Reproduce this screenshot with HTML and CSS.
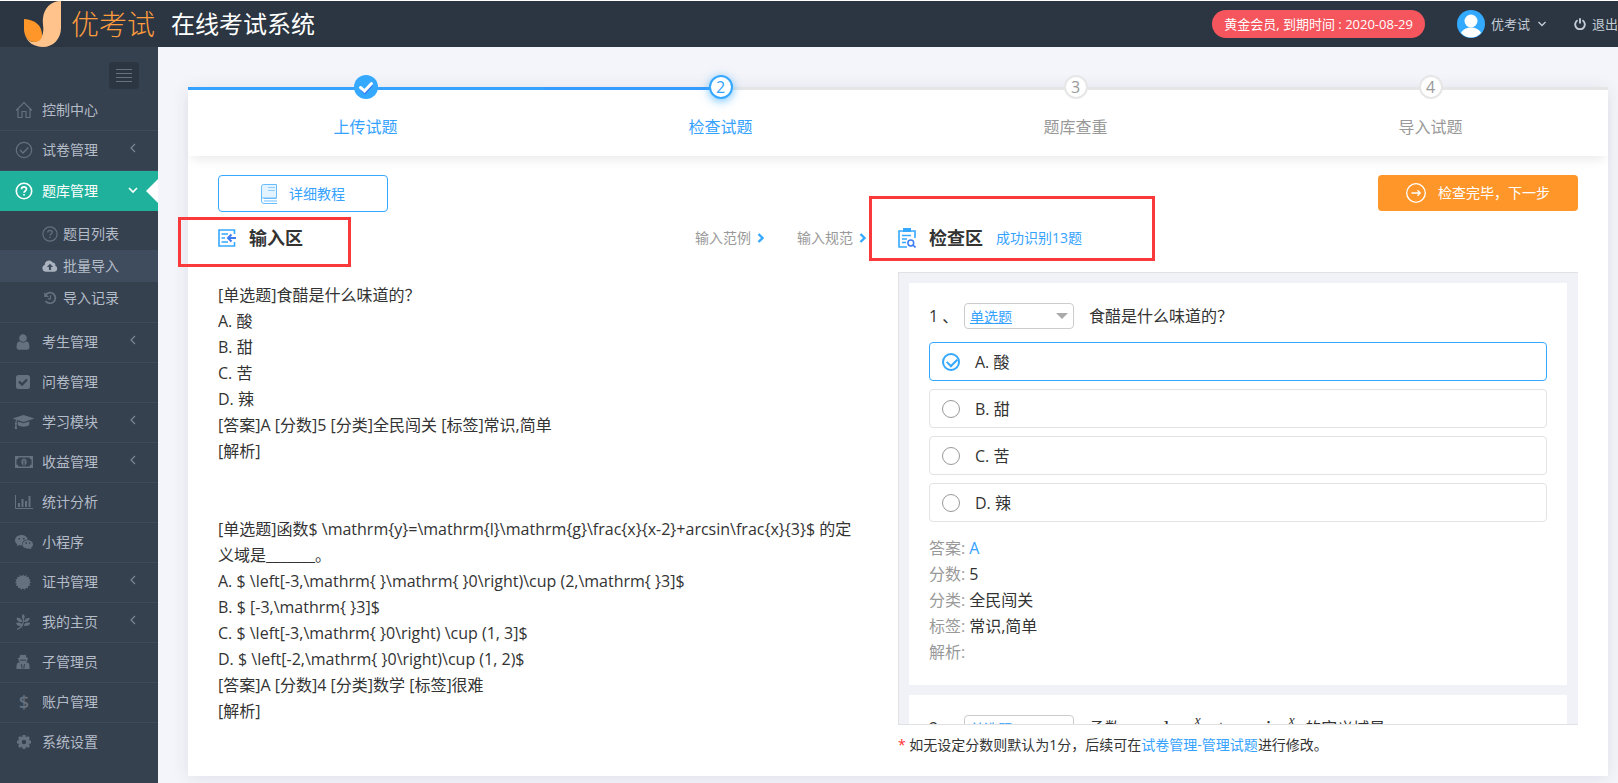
FILE: index.html
```html
<!DOCTYPE html>
<html lang="zh-CN">
<head>
<meta charset="utf-8">
<title>优考试 在线考试系统</title>
<link rel="stylesheet" href="styles.css">
</head>
<body>
<header class="topbar">
  <a class="brand" href="#">
    <svg class="brand-logo" viewBox="0 0 38 46" aria-hidden="true">
      <path d="M18 35C21 28 18 23 19 17C20 7 27 0 37 0V27C37 38 29 46 19 46C10 46 3 41 1 34C4 42 14 44 18 35Z" fill="#ffc38b"/>
      <path d="M0 18C11 19 18 24 18 34C18 38 15 41 11 41C4 41 0 35 0 28Z" fill="#ff962a"/>
    </svg>
    <span class="brand-name">优考试</span>
  </a>
  <h1 class="system-name">在线考试系统</h1>
  <span class="member-badge">黄金会员, 到期时间 : 2020-08-29</span>
  <button class="account" type="button">
    <svg class="avatar" viewBox="0 0 28 28" aria-hidden="true">
      <circle cx="14" cy="14" r="14" fill="#33a9ff"/>
      <circle cx="14" cy="11" r="6.5" fill="#fff"/>
      <path d="M4 23C6 19 10 17.500 14 17.500S22 19 24 23C21 26 18 27.500 14 27.500S7 26 4 23Z" fill="#fff"/>
    </svg>
    <span>优考试</span>
    <svg class="caret" viewBox="0 0 8 8" aria-hidden="true"><path d="M.5 2L4 5.500L7.500 2" fill="none" stroke="currentColor" stroke-width="1.300"/></svg>
  </button>
  <a class="logout" href="#">
    <svg viewBox="0 0 12 12" aria-hidden="true"><path d="M3.600 2.300A4.800 4.800 0 1 0 8.400 2.300M6 .3V5.600" fill="none" stroke="currentColor" stroke-width="1.900"/></svg>
    <span>退出</span>
  </a>
</header>

<div class="layout">
  <aside class="sidebar">
    <button class="menu-toggle" type="button" aria-label="菜单">
      <svg viewBox="0 0 16 14" aria-hidden="true"><path d="M0 .5H16M0 4.500H16M0 8.500H16M0 12.500H16" stroke="#66717f"/></svg>
    </button>
    <nav>
      <ul class="menu">
        <li><a class="menu-item" href="#"><svg class="ico" viewBox="0 0 18 18"><path d="M1 9.500L9 1.500L17 9.500M3 8V16.500H7V10.500H11V16.500H15V8" fill="none" stroke="currentColor" stroke-width="1.200"/></svg><span>控制中心</span></a></li>
        <li><a class="menu-item" href="#"><svg class="ico" viewBox="0 0 18 18"><circle cx="9" cy="9" r="7.700" fill="none" stroke="currentColor" stroke-width="1.200"/><path d="M5 9L8 12L13.300 6.500" fill="none" stroke="currentColor" stroke-width="1.300"/></svg><span>试卷管理</span><svg class="arrow" viewBox="0 0 10 10"><path d="M7 1L3 5L7 9" /></svg></a></li>
        <li><a class="menu-item active" href="#"><svg class="ico" viewBox="0 0 18 18"><circle cx="9" cy="9" r="7.700" fill="none" stroke="currentColor" stroke-width="1.600"/><path d="M6.500 7.300C6.500 4.200 11.500 4.200 11.500 7.100C11.500 8.900 9 9 9 10.800M9 12V13.600" fill="none" stroke="currentColor" stroke-width="1.700"/></svg><span>题库管理</span><svg class="arrow" viewBox="0 0 10 10"><path d="M1 3L5 7L9 3"/></svg></a>
          <ul class="submenu">
            <li><a href="#"><svg class="ico" viewBox="0 0 18 18"><circle cx="9" cy="9" r="8" fill="none" stroke="currentColor" stroke-width="1.300"/><path d="M6.500 7.300C6.500 4.200 11.500 4.200 11.500 7.100C11.500 8.900 9 9 9 10.800M9 12V13.600" fill="none" stroke="currentColor" stroke-width="1.500"/></svg><span>题目列表</span></a></li>
            <li><a class="current" href="#"><svg class="ico" viewBox="0 0 18 18"><path d="M4 15.500A4 4 0 0 1 3 7.800A5 5 0 0 1 12 5A3 3 0 0 1 15 8.800A3.500 3.500 0 0 1 14 15.500ZM9 6.500L5.500 10H7.800V13.500H10.200V10H12.500Z" fill="currentColor" fill-rule="evenodd"/></svg><span>批量导入</span></a></li>
            <li><a href="#"><svg class="ico" viewBox="0 0 18 18"><path d="M4.300 5.200A6 6 0 1 1 4 12.300" fill="none" stroke="currentColor" stroke-width="2"/><path d="M2.500 2.500V8H8Z" fill="currentColor"/><path d="M9.500 6V10H6.500" fill="none" stroke="currentColor" stroke-width="1.400"/></svg><span>导入记录</span></a></li>
          </ul>
        </li>
        <li><a class="menu-item" href="#"><svg class="ico solid" viewBox="0 0 1792 1792"><path d="M1536 1399q0 109-62.500 187t-150.500 78H469q-88 0-150.500-78T256 1399q0-85 8.500-160.500t31.500-152 58.500-131 94-89T583 832q131 128 313 128t313-128q76 0 134.500 34.500t94 89 58.500 131 31.500 152 8.500 160.500zM1280 512q0 159-112.500 271.500T896 896 624.500 783.500 512 512t112.500-271.500T896 128t271.500 112.500T1280 512z"/></svg><span>考生管理</span><svg class="arrow" viewBox="0 0 10 10"><path d="M7 1L3 5L7 9"/></svg></a></li>
        <li><a class="menu-item" href="#"><svg class="ico solid" viewBox="0 0 18 18"><rect x="2" y="2" width="14" height="14" rx="2.500"/><path d="M5 8.500L8 11.500L13 6.500" fill="none" stroke="#36414f" stroke-width="2.300"/></svg><span>问卷管理</span></a></li>
        <li><a class="menu-item" href="#"><svg class="ico wide solid" viewBox="0 0 2304 1792"><path d="M1774 836l18 316q4 69-82 128t-235 93.500-323 34.500-323-34.500T594 1280t-82-128l18-316 574 181q22 7 48 7t48-7zM2304 512q0 23-22 31l-1120 352q-4 1-10 1t-10-1L490 689q-43 34-71 111.500T385 978q63 36 63 109 0 69-58 107l58 433q2 14-8 25-9 11-24 11H224q-15 0-24-11-10-11-8-25l58-433q-58-38-58-107 0-73 65-111 11-207 98-330L22 543q-22-8-22-31t22-31L1142 129q4-1 10-1t10 1l1120 352q22 8 22 31z"/></svg><span>学习模块</span><svg class="arrow" viewBox="0 0 10 10"><path d="M7 1L3 5L7 9"/></svg></a></li>
        <li><a class="menu-item" href="#"><svg class="ico" viewBox="0 0 18 18"><path d="M0 3H18V15H0ZM3.500 4.500Q3.500 6.500 1.500 6.500V11.500Q3.500 11.500 3.500 13.500H14.500Q14.500 11.500 16.500 11.500V6.500Q14.500 6.500 14.500 4.500Z" fill="currentColor" fill-rule="evenodd"/><ellipse cx="9" cy="9" rx="2.600" ry="3.500" fill="currentColor"/><path d="M9 6.800V11M8 11.200H10" stroke="#36414f"/></svg><span>收益管理</span><svg class="arrow" viewBox="0 0 10 10"><path d="M7 1L3 5L7 9"/></svg></a></li>
        <li><a class="menu-item" href="#"><svg class="ico" viewBox="0 0 18 18"><path d="M.5 2V15.500H18" fill="none" stroke="currentColor"/><path d="M4 14V10M7.500 14V6M11 14V8M14.500 14V3" stroke="currentColor" stroke-width="2"/></svg><span>统计分析</span></a></li>
        <li><a class="menu-item" href="#"><svg class="ico" viewBox="0 0 18 18"><path d="M6.500 2C2.900 2 0 4.300 0 7.300C0 9 .9 10.300 2.300 11.300L1.800 13.200L4 12.100C5 12.400 6 12.500 7 12.400C6.300 9 9 6.500 13 6.400C12.400 3.900 9.800 2 6.500 2Z" fill="currentColor"/><path d="M12.800 7.200C9.900 7.200 7.500 9 7.500 11.500S9.900 15.700 12.800 15.700C13.500 15.700 14 15.600 14.600 15.400L16.500 16.300L16 14.700C17.300 13.900 18 12.800 18 11.500C18 9 15.700 7.200 12.800 7.200Z" fill="currentColor"/><path d="M3.500 5.800H5M8 5.800H9.500M10.500 10H12M14 10H15.300" stroke="#36414f" stroke-width="1.400"/></svg><span>小程序</span></a></li>
        <li><a class="menu-item" href="#"><svg class="ico solid" viewBox="0 0 18 18"><path d="M9 1.500L10.300 3.200L12.200 2L12.700 4.200L15 3.700L14.600 6L16.600 6.500L15.500 8.300L17 9.500L15.300 10.800L16.200 12.700L14 13L14 15.300L11.900 14.700L11 16.700L9 15.500L7 16.700L6.100 14.700L4 15.300L4 13L1.800 12.700L2.700 10.800L1 9.500L2.500 8.300L1.400 6.500L3.400 6L3 3.700L5.300 4.200L5.800 2L7.700 3.200Z"/></svg><span>证书管理</span><svg class="arrow" viewBox="0 0 10 10"><path d="M7 1L3 5L7 9"/></svg></a></li>
        <li><a class="menu-item" href="#"><svg class="ico solid" viewBox="0 0 18 18"><path d="M9 1C11.500 2.800 11 5 9.500 6.500C7.500 5 7.300 2.800 9 1ZM2.500 5C5.500 4.300 8 6 8.300 9C5 9.500 2.800 8 2.500 5ZM15.800 5C12.500 4.500 10.200 6.300 10 9C13 9.300 15.500 7.800 15.800 5ZM2 10C5 8.700 8.300 9.700 8.300 12.500C5.500 13.700 2.800 12.800 2 10ZM16.300 10C13.500 8.700 10.300 9.800 9.700 12.500C12.500 13.500 15.500 12.800 16.300 10Z"/><path d="M9.300 5Q10.500 13.500 3 16.500" fill="none" stroke="currentColor" stroke-width="1.200"/></svg><span>我的主页</span><svg class="arrow" viewBox="0 0 10 10"><path d="M7 1L3 5L7 9"/></svg></a></li>
        <li><a class="menu-item" href="#"><svg class="ico solid" viewBox="0 0 18 18"><path d="M5.500 4.500L6.500 1.500Q9 2.500 11.500 1.500L12.500 4.500L14.500 5.300L13.300 6.300V7.500Q13 9.500 11.500 10L14 9.500Q16 11 15.500 16H2.500Q2 11 4 9.500L6.500 10Q5 9.500 4.700 7.500V6.300L3.500 5.300Z"/><path d="M6 7.200H12M7.500 11L8.200 15.500M10.500 11L9.800 15.500" stroke="#36414f" stroke-width="1"/></svg><span>子管理员</span></a></li>
        <li><a class="menu-item" href="#"><b class="ico dollar" aria-hidden="true">$</b><span>账户管理</span></a></li>
        <li><a class="menu-item" href="#"><svg class="ico" viewBox="0 0 18 18"><circle cx="9" cy="9" r="4" fill="none" stroke="currentColor" stroke-width="3.600"/><path d="M9 2V4.500M9 13.500V16M2 9H4.500M13.500 9H16M4 4L5.800 5.800M12.200 12.200L14 14M14 4L12.200 5.800M5.800 12.200L4 14" stroke="currentColor" stroke-width="2.800"/></svg><span>系统设置</span></a></li>
      </ul>
    </nav>
  </aside>

  <main class="main">
    <section class="card">
      <ol class="steps">
        <li class="step done"><span class="dot"><svg viewBox="0 0 24 24" aria-hidden="true"><path d="M7 14L11 18L18 10" fill="none" stroke="#3b7cf5" stroke-width="2.500"/><path d="M6.500 12.500L10.500 16L17.500 8.500" fill="none" stroke="#fff" stroke-width="3" stroke-linecap="round"/></svg></span><span class="step-label">上传试题</span></li>
        <li class="step now"><span class="dot">2</span><span class="step-label">检查试题</span></li>
        <li class="step"><span class="dot">3</span><span class="step-label">题库查重</span></li>
        <li class="step"><span class="dot">4</span><span class="step-label">导入试题</span></li>
      </ol>

      <div class="content">
        <div class="toolbar">
          <button class="btn tutorial" type="button">
            <svg viewBox="0 0 16 20" aria-hidden="true"><path d="M2.500 .5H15.500V14H.5V2.500Q.5 .5 2.500 .5Z" fill="#e3f3ff" stroke="#69bdff"/><path d="M.5 14V17Q.5 19.500 3 19.500H16M3 14.500H15.500M3 17H16" fill="none" stroke="#69bdff"/><path d="M7 3.500H14M7 6.500H14" stroke="#8dcdff"/></svg>
            <span>详细教程</span>
          </button>
          <button class="btn next" type="button">
            <svg viewBox="0 0 20 20" aria-hidden="true"><circle cx="10" cy="10" r="9.300" fill="none" stroke="#fff" stroke-width="1.300"/><path d="M5.500 10H14M11.500 7.300L14.200 10L11.500 12.700" fill="none" stroke="#fff" stroke-width="1.300"/></svg>
            <span>检查完毕，下一步</span>
          </button>
        </div>

        <div class="columns">
          <section class="pane">
            <div class="pane-head">
              <svg class="head-icon" viewBox="0 0 18 18" aria-hidden="true"><path d="M16.500 5V1H1V17H16.500V13" fill="none" stroke="#35a8ff" stroke-width="1.600"/><path d="M3.500 5H10M3.500 9H7M3.500 13H10" stroke="#35a8ff" stroke-width="1.300"/><path d="M18 9H10.500M13.500 5.500L10 9L13.500 12.500" fill="none" stroke="#3b7cf5" stroke-width="2"/></svg>
              <h2><label for="source">输入区</label></h2>
              <div class="help-links">
                <a href="#">输入范例<svg viewBox="0 0 8 10" aria-hidden="true"><path d="M1.500 1L5.500 5L1.500 9"/></svg></a>
                <a href="#">输入规范<svg viewBox="0 0 8 10" aria-hidden="true"><path d="M1.500 1L5.500 5L1.500 9"/></svg></a>
              </div>
              <span class="mark mark-input"></span>
            </div>
            <textarea class="editor" id="source" spellcheck="false">[单选题]食醋是什么味道的？
A. 酸
B. 甜
C. 苦
D. 辣
[答案]A [分数]5 [分类]全民闯关 [标签]常识,简单
[解析]


[单选题]函数$ \mathrm{y}=\mathrm{l}\mathrm{g}\frac{x}{x-2}+arcsin\frac{x}{3}$ 的定义域是_______。
A. $ \left[-3,\mathrm{ }\mathrm{ }0\right)\cup (2,\mathrm{ }3]$
B. $ [-3,\mathrm{ }3]$
C. $ \left[-3,\mathrm{ }0\right) \cup (1, 3]$
D. $ \left[-2,\mathrm{ }0\right)\cup (1, 2)$
[答案]A [分数]4 [分类]数学 [标签]很难
[解析]</textarea>
          </section>

          <section class="pane">
            <div class="pane-head">
              <svg class="head-icon" viewBox="0 0 18 20" aria-hidden="true"><path d="M9 19H1V3H17V10" fill="none" stroke="#35a8ff" stroke-width="1.600"/><path d="M5 0H13V4H5Z" fill="#35a8ff"/><path d="M4 7.500H13M4 11H9M4 14.500H8" stroke="#35a8ff" stroke-width="1.300"/><circle cx="12.800" cy="15" r="2.900" fill="none" stroke="#3b7cf5" stroke-width="1.500"/><path d="M15 17L17.500 19.500" stroke="#3b7cf5" stroke-width="1.600"/></svg>
              <h2>检查区</h2>
              <span class="found">成功识别13题</span>
              <span class="mark mark-review"></span>
            </div>
            <div class="review">
              <article class="question">
                <div class="q-title">
                  <span class="q-no">1 、</span>
                  <span class="type-box"><select aria-label="第1题题型"><option>单选题</option></select></span>
                  <span>食醋是什么味道的？</span>
                </div>
                <div class="options">
                  <label class="option"><input type="radio" name="q1" checked><span>A. 酸</span></label>
                  <label class="option"><input type="radio" name="q1"><span>B. 甜</span></label>
                  <label class="option"><input type="radio" name="q1"><span>C. 苦</span></label>
                  <label class="option"><input type="radio" name="q1"><span>D. 辣</span></label>
                </div>
                <dl class="meta">
                  <div><dt>答案:</dt><dd class="key">A</dd></div>
                  <div><dt>分数:</dt><dd>5</dd></div>
                  <div><dt>分类:</dt><dd>全民闯关</dd></div>
                  <div><dt>标签:</dt><dd>常识,简单</dd></div>
                  <div><dt>解析:</dt><dd></dd></div>
                </dl>
              </article>
              <article class="question">
                <div class="q-title">
                  <span class="q-no">2 、</span>
                  <span class="type-box"><select aria-label="第2题题型"><option>单选题</option></select></span>
                  <span class="formula">函数<span class="math">y = lg<span class="frac"><i>x</i><i>x−2</i></span>+ arcsin<span class="frac"><i>x</i><i>3</i></span></span>的定义域是</span>
                </div>
              </article>
            </div>
            <p class="note"><span class="star">*</span> 如无设定分数则默认为1分，后续可在<a href="#">试卷管理-管理试题</a>进行修改。</p>
          </section>
        </div>
      </div>
    </section>
  </main>
</div>
</body>
</html>
```
FILE: styles.css
```css
* { box-sizing: border-box; }

body {
  margin: 0;
  min-height: 100vh;
  display: flex;
  flex-direction: column;
  overflow: hidden;
  background: #f4f5fa;
  color: #333;
  font: 14px/20px "Open Sans", "Noto Sans CJK SC", sans-serif;
}

h1, h2, p, ul, ol, dl, dd { margin: 0; padding: 0; }
ul, ol { list-style: none; }
a { color: inherit; text-decoration: none; }
button { font: inherit; cursor: pointer; }

/* top bar */
.topbar {
  display: flex;
  align-items: center;
  height: 47px;
  padding-left: 24px;
  border-top: 1px solid #fff;
  background: #2b3642;
  color: #c5ccd6;
  font-size: 13px;
  white-space: nowrap;
  overflow: hidden;
}
.brand { display: flex; align-items: center; gap: 9px; }
.brand-logo { width: 38px; height: 46px; }
.brand-name { font-size: 28px; line-height: 46px; font-weight: 300; color: #ff9c3d; }
.system-name { margin: 0 auto 0 16px; font-size: 24px; line-height: 46px; font-weight: 400; color: #fff; }
.member-badge {
  padding: 4px 12px;
  border-radius: 14px;
  background: #f5555d;
  color: #fff;
}
.account {
  display: flex;
  align-items: center;
  gap: 6px;
  margin-left: 32px;
  padding: 0;
  border: 0;
  background: none;
  color: inherit;
}
.avatar { width: 28px; height: 28px; }
.caret { width: 8px; height: 8px; margin-left: 2px; }
.logout { display: flex; align-items: center; gap: 6px; margin-left: 28px; }
.logout svg { width: 12px; height: 12px; }

/* sidebar */
.layout { display: flex; flex: 1; }
.sidebar { flex: none; width: 158px; padding-top: 15px; background: #36414f; }
.menu-toggle {
  display: flex;
  align-items: center;
  justify-content: center;
  width: 30px;
  height: 27px;
  margin: 0 19px 2px auto;
  padding: 0;
  border: 0;
  border-radius: 4px;
  background: #2b3642;
}
.menu-toggle svg { width: 16px; height: 14px; }
.menu > li { border-bottom: 1px solid #3f4b5a; }
.menu > li:last-child { border-bottom: 0; }
.menu-item {
  display: flex;
  align-items: center;
  height: 39px;
  padding: 0 20px 2px 13px;
  color: #b4bcc8;
}
.menu-item span { margin-left: 8px; }
.ico { flex: none; width: 16px; height: 16px; color: #66717f; }
.menu-item .ico { width: 18px; height: 18px; margin: 0 1px 0 2px; }
.menu-item .ico.wide { width: 21px; margin: 0; }
.menu-item .ico.solid:not(.wide) { margin: 0 2px 0 1px; }
.menu-item .dollar { font-size: 18px; line-height: 18px; font-weight: 600; text-align: center; }
.solid { fill: currentColor; }
.arrow { width: 10px; height: 10px; margin: 0 0 3px auto; }
.arrow path { fill: none; stroke: #7b8694; stroke-width: 1.200; }
.menu-item.active { position: relative; height: 40px; padding-bottom: 0; background: #1fb19b; color: #fff; }
.menu-item.active .ico { color: #fff; }
.menu-item.active .arrow path { stroke: #fff; stroke-width: 1.600; }
.menu-item.active::after {
  content: "";
  position: absolute;
  top: 8px;
  right: 0;
  border: 12px solid transparent;
  border-left-width: 0;
  border-right-color: #fff;
}
.submenu { padding: 7px 0 8px; }
.submenu a { display: flex; align-items: center; gap: 5px; height: 32px; padding-left: 42px; color: #b4bcc8; }
.submenu .current { background: #3f4c5d; }
.submenu .current .ico { color: #a9b2be; }

/* wizard */
.main { flex: 1; min-width: 0; padding: 40px 10px 7px 30px; }
.card { min-height: 689px; background: #fff; box-shadow: 0 2px 16px rgba(40, 50, 90, .1); }
.steps { display: grid; grid-template-columns: repeat(4, 1fr); background: #fff; box-shadow: 0 8px 10px -4px rgba(0, 0, 0, .08); }
.step {
  display: flex;
  flex-direction: column;
  align-items: center;
  height: 69px;
  border-top: 3px solid #e6e6e6;
  color: #999;
  font-size: 16px;
  position: relative;
}
.dot {
  z-index: 1;
  width: 24px;
  height: 24px;
  margin-top: -15px;
  border: 2px solid #e6e6e6;
  border-radius: 50%;
  background: #fff;
  line-height: 20px;
  text-align: center;
}
.step-label { margin-top: 16px; line-height: 24px; }
.step.done { border-color: #35a2ff; color: #35a2ff; }
.step.done .dot { border: 0; background: #35a8ff; }
.step.now { color: #35a2ff; }
.step.now .dot { border-color: #35a8ff; box-shadow: 0 2px 10px rgba(53, 168, 255, .7); }
.step.now::before {
  content: "";
  position: absolute;
  top: -3px;
  left: 0;
  width: 50%;
  height: 3px;
  background: #359cff;
}

/* toolbar */
.content { padding: 19px 30px 20px; }
.toolbar { display: flex; justify-content: space-between; align-items: flex-start; }
.btn { display: flex; align-items: center; justify-content: center; border-radius: 4px; }
.tutorial { gap: 12px; width: 170px; height: 37px; border: 1px solid #35a8ff; background: #fff; color: #35a2ff; }
.tutorial svg { width: 16px; height: 20px; }
.next { gap: 12px; width: 200px; height: 36px; border: 0; background: #ff962a; color: #fff; }
.next svg { width: 20px; height: 20px; }

/* columns */
.columns { display: grid; grid-template-columns: 65fr 68fr; gap: 30px; }
.pane { min-width: 0; }
.pane-head { position: relative; display: flex; align-items: center; height: 52px; }
.head-icon { width: 18px; height: 20px; }
.pane-head h2 { margin-left: 13px; font-size: 18px; line-height: 24px; font-weight: 700; }
.found { margin-left: 13px; color: #35a2ff; }
.help-links { display: flex; gap: 32px; margin: 0 1px 0 auto; color: #999; }
.help-links a { display: flex; align-items: center; gap: 6px; }
.help-links svg { width: 8px; height: 10px; }
.help-links path { fill: none; stroke: #35a8ff; stroke-width: 2.400; }
.mark { position: absolute; border: 3px solid #fa3a3a; pointer-events: none; }
.mark-input { top: 5px; left: -40px; width: 173px; height: 50px; }
.mark-review { top: -16px; left: -29px; width: 286px; height: 65px; }
.editor {
  display: block;
  width: 100%;
  height: 443px;
  margin-top: 18px;
  padding: 0 8px 0 0;
  border: 0;
  outline: 0;
  resize: none;
  overflow: hidden;
  background: none;
  color: #333;
  font: 16px/26px "Open Sans", "Noto Sans CJK SC", sans-serif;
}

/* review */
.review {
  display: flex;
  flex-direction: column;
  gap: 10px;
  height: 453px;
  margin-top: 8px;
  padding: 10px 11px 0 10px;
  border: 1px solid #e1e1e4;
  border-right: 0;
  background: #f1f2f7;
  overflow: hidden;
  font-size: 16px;
  line-height: 26px;
}
.question { flex: none; padding: 20px; background: #fff; }
.q-title { display: flex; align-items: center; height: 26px; margin-bottom: 13px; white-space: nowrap; }
.q-no { width: 35px; }
.type-box { position: relative; display: flex; width: 110px; height: 26px; margin-right: 15px; }
.type-box::after {
  content: "";
  position: absolute;
  top: 10px;
  right: 6px;
  border: 6px solid transparent;
  border-top-color: #aaa;
  border-bottom-width: 0;
  pointer-events: none;
}
.type-box select {
  width: 100%;
  padding: 0 5px;
  appearance: none;
  border: 1px solid #ccc;
  border-radius: 4px;
  background: #fff;
  color: #35a2ff;
  font: 14px/24px "Noto Sans CJK SC", sans-serif;
  text-decoration: underline;
}
.options { display: grid; gap: 8px; }
.option {
  display: flex;
  align-items: center;
  gap: 15px;
  height: 39px;
  padding: 0 12px;
  border: 1px solid #e3e3e3;
  border-radius: 4px;
}
.option input {
  appearance: none;
  position: relative;
  width: 18px;
  height: 18px;
  margin: 0;
  border: 1px solid #999;
  border-radius: 50%;
}
.option:has(:checked) { border-color: #35a8ff; }
.option input:checked { border: 2px solid #35a8ff; }
.option input:checked::after {
  content: "";
  position: absolute;
  top: 3px;
  left: 3px;
  width: 8px;
  height: 5px;
  border: solid #35a8ff;
  border-width: 0 0 2px 2px;
  transform: rotate(-45deg);
}
.meta { margin-top: 13px; }
.meta div { display: flex; gap: 4px; }
.meta dt { color: #999; }
.meta .key { color: #35a2ff; }
.formula, .math { display: flex; align-items: center; }
.math { gap: 6px; margin: 0 10px; font-family: "Liberation Serif", serif; font-size: 21px; }
.frac { display: flex; flex-direction: column; align-items: center; font-size: 14px; line-height: 14px; }
.frac i:first-child { border-bottom: 1px solid #333; }
.note { margin-top: 10px; }
.note a { color: #35a2ff; }
.star { color: #f33; }
```
